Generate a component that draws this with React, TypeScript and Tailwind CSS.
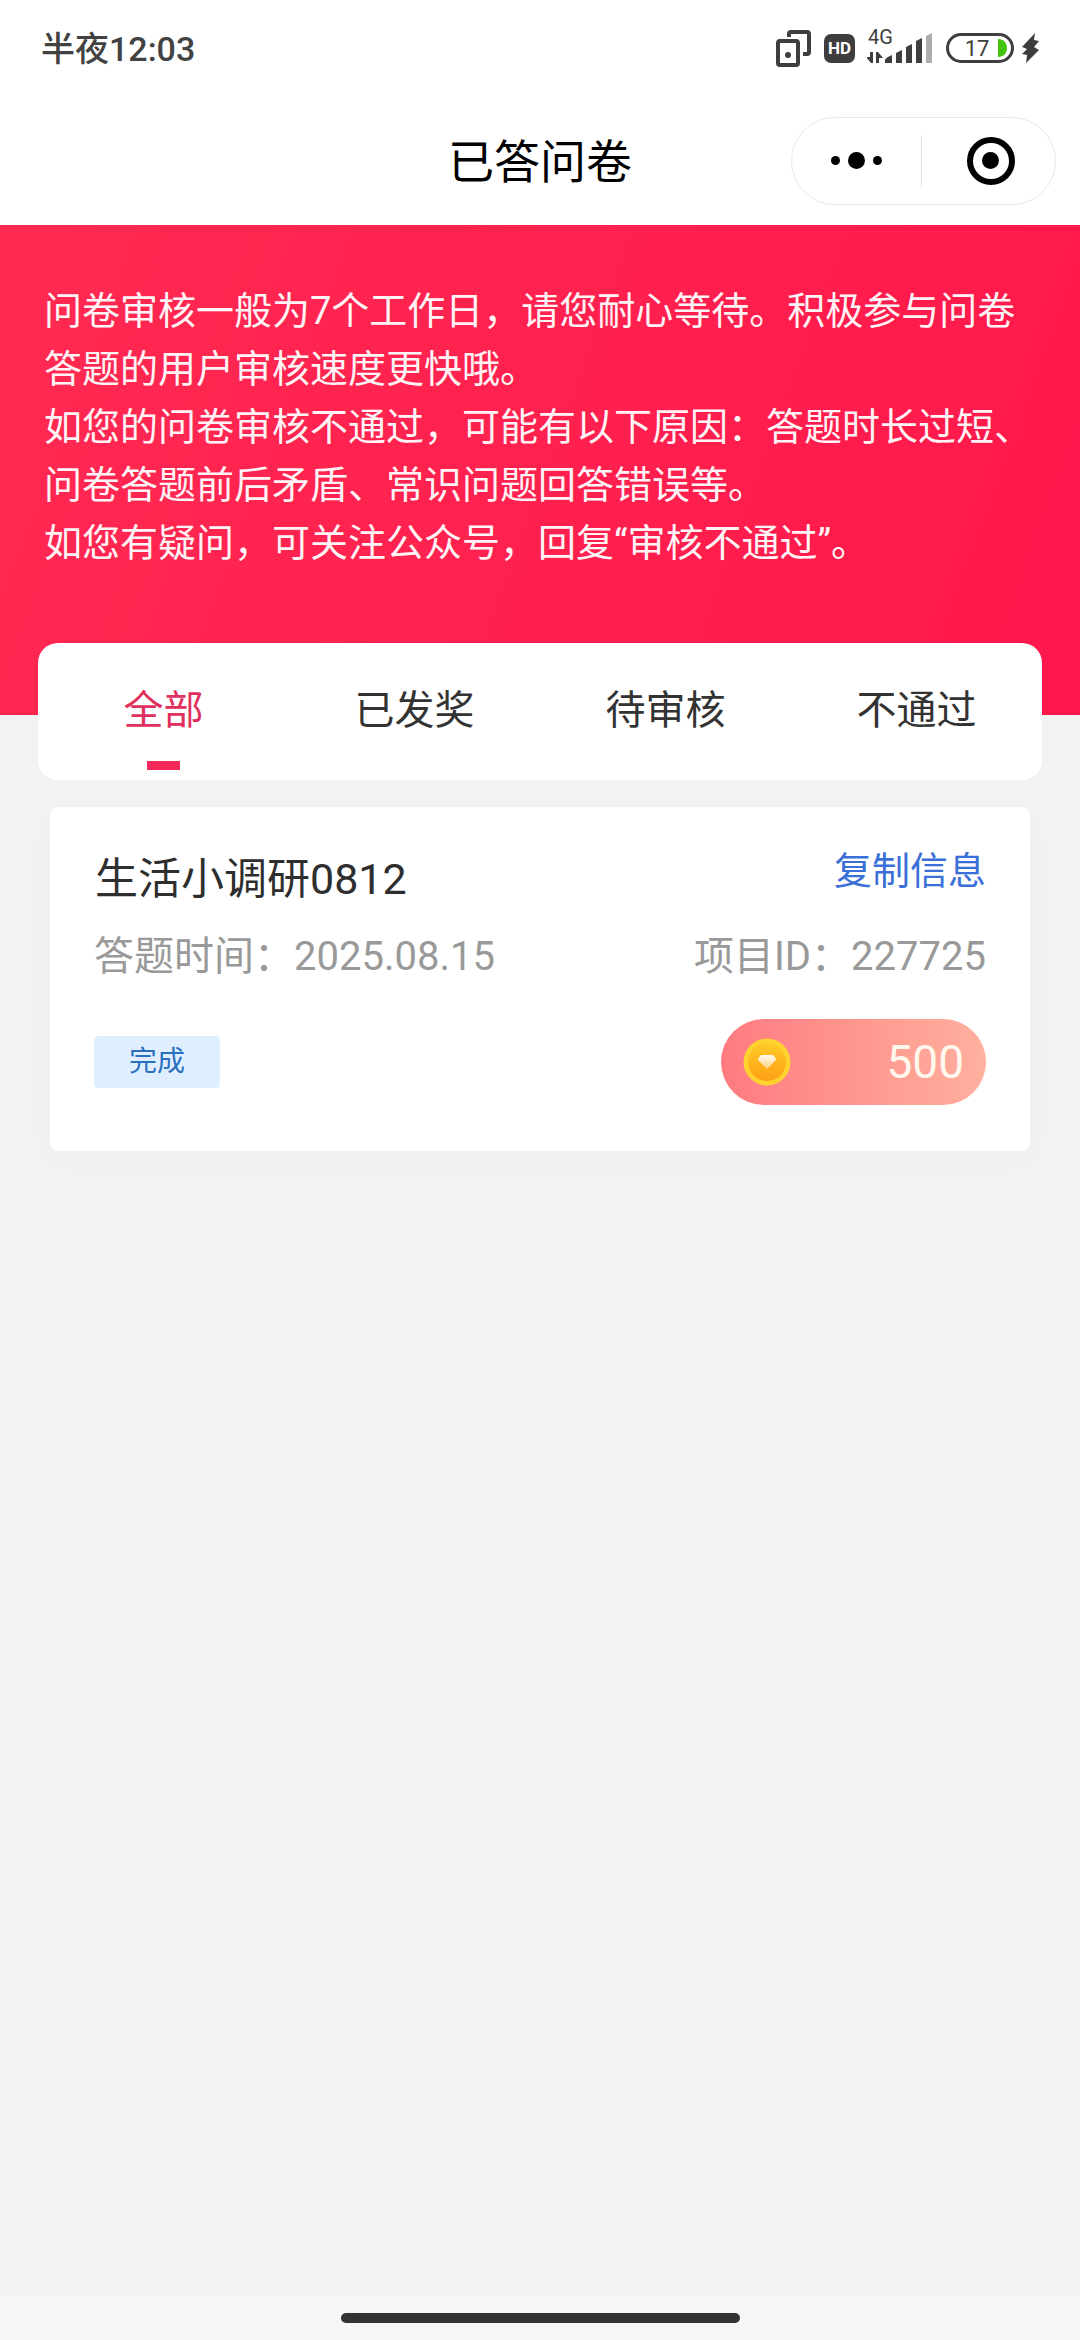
import { useState } from "react";
import clsx from "clsx";

const TABS = ["全部", "已发奖", "待审核", "不通过"];

const NOTICE = [
  "问卷审核一般为7个工作日，请您耐心等待。积极参与问卷答题的用户审核速度更快哦。",
  "如您的问卷审核不通过，可能有以下原因：答题时长过短、问卷答题前后矛盾、常识问题回答错误等。",
  "如您有疑问，可关注公众号，回复“审核不通过”。",
];

const RECORDS = [
  {
    id: "227725",
    title: "生活小调研0812",
    date: "2025.08.15",
    status: "完成",
    reward: 500,
  },
];

function CloneIcon() {
  return (
    <svg width="37" height="40" viewBox="0 0 37 40" fill="none" stroke="#3e3e3e" strokeWidth="4">
      <rect x="3" y="13" width="20" height="24" rx="2" />
      <path d="M14 9V6a2 2 0 0 1 2-2h16a2 2 0 0 1 2 2v18a2 2 0 0 1-2 2h-4" />
      <circle cx="13" cy="27" r="3" fill="#3e3e3e" stroke="none" />
    </svg>
  );
}

function HdIcon() {
  return (
    <svg width="31" height="40" viewBox="0 0 31 40">
      <rect x="0" y="6" width="31" height="29" rx="7" fill="#3e3e3e" />
      <text x="15.5" y="26" textAnchor="middle" fontSize="17" fontWeight="700" fill="#fff">
        HD
      </text>
    </svg>
  );
}

function SignalIcon() {
  return (
    <svg width="66" height="52" viewBox="0 -6 66 52" fill="#3e3e3e">
      <text x="1" y="16" fontSize="20">
        4G
      </text>
      {/* 上下行箭头 */}
      <path d="M3 24h3v11H4l-5-6h4zM9 35V24h2l5 6h-4v5z" />
      <path d="M18 32q0-2 7-5v8h-7z" />
      <path d="M29 25l6-3v13h-6z" />
      <path d="M39 19l6-3v19h-6z" />
      <path d="M49 13l6-3v25h-6z" />
      <path d="M59 8l6-3v30h-6z" fill="#adadad" />
    </svg>
  );
}

function BatteryIcon() {
  return (
    <svg width="95" height="40" viewBox="0 0 95 40">
      <rect x="2.5" y="6.5" width="65" height="27" rx="13.5" fill="none" stroke="#3e3e3e" strokeWidth="3" />
      <text x="32" y="28" textAnchor="middle" fontSize="22" fill="#3e3e3e">
        17
      </text>
      <path d="M53 11c6 0 9 4 9 9s-3 9-9 9z" fill="#43c40f" />
      <path d="M90 5L77 19l5 2-5 5 5 1-1 8 13-13-5-3 5-6-5-1z" fill="#3e3e3e" />
    </svg>
  );
}

function CoinIcon() {
  return (
    <svg width="48" height="48" viewBox="0 0 48 48">
      <defs>
        <linearGradient id="coin" x1="0" y1="0" x2="0" y2="1">
          <stop offset="0" stopColor="#ffcb26" />
          <stop offset="1" stopColor="#fe9f14" />
        </linearGradient>
        <linearGradient id="gem" x1="0" y1="0" x2="0" y2="1">
          <stop offset="0" stopColor="#fffaf0" />
          <stop offset="1" stopColor="#ffd27e" />
        </linearGradient>
      </defs>
      <circle cx="24" cy="24" r="23.5" fill="#ffd32f" />
      <circle cx="24" cy="24" r="19" fill="url(#coin)" />
      <path d="M19 17h10q1 0 2 1l2 3q0 1-1 2l-8 8-8-8q-1-1-1-2l2-3q1-1 2-1z" fill="url(#gem)" />
    </svg>
  );
}

function StatusBar() {
  return (
    <div className="flex h-24 items-center justify-between pl-[41px] pr-10">
      <span className="pt-0.5 text-[34px] font-medium text-[#424242]">半夜12:03</span>
      <div className="flex items-center gap-3">
        <CloneIcon />
        <HdIcon />
        <SignalIcon />
        <BatteryIcon />
      </div>
    </div>
  );
}

function TitleBar() {
  return (
    <header className="grid h-[129px] grid-cols-[1fr_auto_1fr] items-center px-6">
      <h1 className="col-start-2 pt-1 text-[46px] text-black">已答问卷</h1>
      <div className="flex h-[88px] w-[265px] items-center justify-self-end rounded-full border border-[#e9e9e9]">
        <button type="button" aria-label="更多" className="flex flex-1 items-center justify-center gap-2">
          <span className="size-[9px] rounded-full bg-black" />
          <span className="size-[17px] rounded-full bg-black" />
          <span className="size-[9px] rounded-full bg-black" />
        </button>
        <span className="h-[52px] w-px bg-[#e0e0e0]" />
        <button type="button" aria-label="关闭" className="flex flex-1 items-center justify-center pl-1">
          <span className="flex size-12 items-center justify-center rounded-full border-[6px] border-black">
            <span className="size-[17px] rounded-full bg-black" />
          </span>
        </button>
      </div>
    </header>
  );
}

function RecordCard({ record }: { record: (typeof RECORDS)[number] }) {
  return (
    <article className="rounded-lg bg-white px-11 pb-[46px] pt-9 shadow-[0_8px_40px_rgba(0,40,30,0.02)]">
      <div className="flex items-start justify-between">
        <h2 className="pl-px pt-1 text-[43px] leading-[64px] text-[#2e2e2e]">{record.title}</h2>
        <button type="button" className="text-[38px] leading-[56px] text-[#3a6fd8]">
          复制信息
        </button>
      </div>
      <div className="mt-4 flex justify-between text-[40px] leading-[60px] text-[#999999]">
        <span>答题时间：{record.date}</span>
        <span>项目ID：{record.id}</span>
      </div>
      <div className="mt-8 flex items-center justify-between">
        <span className="rounded-[4px] bg-[#e0efff] px-[35px] py-[5px] text-[28px] leading-[42px] text-[#2a70bf]">
          {record.status}
        </span>
        <div className="flex h-[86px] w-[265px] items-center justify-between rounded-full bg-linear-to-r from-[#ff7a80] to-[#ffb09e] px-[22px]">
          <CoinIcon />
          <span className="text-[46px] leading-[46px] text-[#fff8ee]">{record.reward}</span>
        </div>
      </div>
    </article>
  );
}

export default function App() {
  const [active, setActive] = useState(TABS[0]);

  return (
    <div className="flex min-h-screen flex-col bg-[#f2f2f2] font-[Roboto,'Noto_Sans_CJK_SC',sans-serif]">
      <div className="bg-white">
        <StatusBar />
        <TitleBar />
      </div>

      <section className="bg-linear-[110deg] from-[#ff2a52] to-[#ff174b] px-11 pb-[143px] pt-[57px] text-[38px] leading-[58px] text-[#fff3f5]">
        {NOTICE.map((line) => (
          <p key={line}>{line}</p>
        ))}
      </section>

      {/* 标签栏压在红色区域下边缘 */}
      <nav className="mx-[38px] -mt-[72px] grid grid-cols-4 rounded-[20px] bg-white">
        {TABS.map((tab) => (
          <button
            key={tab}
            type="button"
            onClick={() => setActive(tab)}
            className={clsx(
              "flex flex-col items-center pb-[10px] pt-[38px] text-[40px] leading-[60px]",
              tab === active ? "text-[#e0305e]" : "text-[#333333]"
            )}
          >
            {tab}
            <span className={clsx("mt-5 h-[9px] w-[33px]", tab === active && "bg-[#f62a5a]")} />
          </button>
        ))}
      </nav>

      <main className="flex-1 px-[50px] pt-[27px]">
        {RECORDS.map((r) => (
          <RecordCard key={r.id} record={r} />
        ))}
      </main>

      <footer className="flex h-11 items-center justify-center bg-[#f6f6f6]">
        <span className="h-[10px] w-[399px] rounded-full bg-[#323232]" />
      </footer>
    </div>
  );
}
